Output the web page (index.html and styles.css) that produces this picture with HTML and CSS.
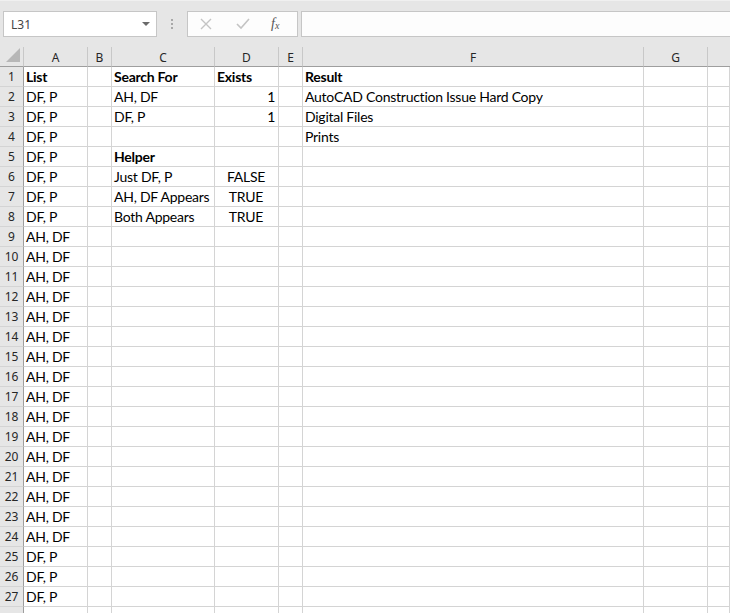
FILE: index.html
```html
<!DOCTYPE html>
<html>
<head>
<meta charset="utf-8">
<link rel="stylesheet" href="styles.css">
</head>
<body>
<div class="app">
  <div class="toolbar">
    <div class="namebox"><span>L31</span><span class="arrow"></span></div>
    <div class="dots"><i></i><i></i><i></i></div>
    <div class="fxbox">
      <svg class="ico" width="14" height="14" viewBox="0 0 14 14"><path d="M2 2 L12 12 M12 2 L2 12" stroke="#c4c4c4" stroke-width="1.4" fill="none"/></svg>
      <svg class="ico" width="16" height="14" viewBox="0 0 16 14"><path d="M2 7 L6 11 L14 2" stroke="#c4c4c4" stroke-width="1.6" fill="none"/></svg>
      <span class="fx">f<sub>x</sub></span>
    </div>
    <div class="formula"></div>
  </div>
  <div class="sheet">
    <div class="hd corner"><span class="tri"></span></div><div class="hd">A</div><div class="hd">B</div><div class="hd">C</div><div class="hd">D</div><div class="hd">E</div><div class="hd">F</div><div class="hd">G</div><div class="hd last"></div>

    <div class="rn">1</div><div class="c b">List</div><div class="c"></div><div class="c b">Search For</div><div class="c b">Exists</div><div class="c"></div><div class="c b">Result</div><div class="c"></div><div class="c"></div>
    <div class="rn">2</div><div class="c">DF, P</div><div class="c"></div><div class="c">AH, DF</div><div class="c r">1</div><div class="c"></div><div class="c">AutoCAD Construction Issue Hard Copy</div><div class="c"></div><div class="c"></div>
    <div class="rn">3</div><div class="c">DF, P</div><div class="c"></div><div class="c">DF, P</div><div class="c r">1</div><div class="c"></div><div class="c">Digital Files</div><div class="c"></div><div class="c"></div>
    <div class="rn">4</div><div class="c">DF, P</div><div class="c"></div><div class="c"></div><div class="c"></div><div class="c"></div><div class="c">Prints</div><div class="c"></div><div class="c"></div>
    <div class="rn">5</div><div class="c">DF, P</div><div class="c"></div><div class="c b">Helper</div><div class="c"></div><div class="c"></div><div class="c"></div><div class="c"></div><div class="c"></div>
    <div class="rn">6</div><div class="c">DF, P</div><div class="c"></div><div class="c">Just DF, P</div><div class="c m">FALSE</div><div class="c"></div><div class="c"></div><div class="c"></div><div class="c"></div>
    <div class="rn">7</div><div class="c">DF, P</div><div class="c"></div><div class="c">AH, DF Appears</div><div class="c m">TRUE</div><div class="c"></div><div class="c"></div><div class="c"></div><div class="c"></div>
    <div class="rn">8</div><div class="c">DF, P</div><div class="c"></div><div class="c">Both Appears</div><div class="c m">TRUE</div><div class="c"></div><div class="c"></div><div class="c"></div><div class="c"></div>
    <div class="rn">9</div><div class="c">AH, DF</div><div class="c"></div><div class="c"></div><div class="c"></div><div class="c"></div><div class="c"></div><div class="c"></div><div class="c"></div>
    <div class="rn">10</div><div class="c">AH, DF</div><div class="c"></div><div class="c"></div><div class="c"></div><div class="c"></div><div class="c"></div><div class="c"></div><div class="c"></div>
    <div class="rn">11</div><div class="c">AH, DF</div><div class="c"></div><div class="c"></div><div class="c"></div><div class="c"></div><div class="c"></div><div class="c"></div><div class="c"></div>
    <div class="rn">12</div><div class="c">AH, DF</div><div class="c"></div><div class="c"></div><div class="c"></div><div class="c"></div><div class="c"></div><div class="c"></div><div class="c"></div>
    <div class="rn">13</div><div class="c">AH, DF</div><div class="c"></div><div class="c"></div><div class="c"></div><div class="c"></div><div class="c"></div><div class="c"></div><div class="c"></div>
    <div class="rn">14</div><div class="c">AH, DF</div><div class="c"></div><div class="c"></div><div class="c"></div><div class="c"></div><div class="c"></div><div class="c"></div><div class="c"></div>
    <div class="rn">15</div><div class="c">AH, DF</div><div class="c"></div><div class="c"></div><div class="c"></div><div class="c"></div><div class="c"></div><div class="c"></div><div class="c"></div>
    <div class="rn">16</div><div class="c">AH, DF</div><div class="c"></div><div class="c"></div><div class="c"></div><div class="c"></div><div class="c"></div><div class="c"></div><div class="c"></div>
    <div class="rn">17</div><div class="c">AH, DF</div><div class="c"></div><div class="c"></div><div class="c"></div><div class="c"></div><div class="c"></div><div class="c"></div><div class="c"></div>
    <div class="rn">18</div><div class="c">AH, DF</div><div class="c"></div><div class="c"></div><div class="c"></div><div class="c"></div><div class="c"></div><div class="c"></div><div class="c"></div>
    <div class="rn">19</div><div class="c">AH, DF</div><div class="c"></div><div class="c"></div><div class="c"></div><div class="c"></div><div class="c"></div><div class="c"></div><div class="c"></div>
    <div class="rn">20</div><div class="c">AH, DF</div><div class="c"></div><div class="c"></div><div class="c"></div><div class="c"></div><div class="c"></div><div class="c"></div><div class="c"></div>
    <div class="rn">21</div><div class="c">AH, DF</div><div class="c"></div><div class="c"></div><div class="c"></div><div class="c"></div><div class="c"></div><div class="c"></div><div class="c"></div>
    <div class="rn">22</div><div class="c">AH, DF</div><div class="c"></div><div class="c"></div><div class="c"></div><div class="c"></div><div class="c"></div><div class="c"></div><div class="c"></div>
    <div class="rn">23</div><div class="c">AH, DF</div><div class="c"></div><div class="c"></div><div class="c"></div><div class="c"></div><div class="c"></div><div class="c"></div><div class="c"></div>
    <div class="rn">24</div><div class="c">AH, DF</div><div class="c"></div><div class="c"></div><div class="c"></div><div class="c"></div><div class="c"></div><div class="c"></div><div class="c"></div>
    <div class="rn">25</div><div class="c">DF, P</div><div class="c"></div><div class="c"></div><div class="c"></div><div class="c"></div><div class="c"></div><div class="c"></div><div class="c"></div>
    <div class="rn">26</div><div class="c">DF, P</div><div class="c"></div><div class="c"></div><div class="c"></div><div class="c"></div><div class="c"></div><div class="c"></div><div class="c"></div>
    <div class="rn">27</div><div class="c">DF, P</div><div class="c"></div><div class="c"></div><div class="c"></div><div class="c"></div><div class="c"></div><div class="c"></div><div class="c"></div>
    <div class="rn"></div><div class="c"></div><div class="c"></div><div class="c"></div><div class="c"></div><div class="c"></div><div class="c"></div><div class="c"></div><div class="c"></div>
  </div>
</div>
</body>
</html>
```
FILE: styles.css
```css
html, body {
  margin: 0;
  padding: 0;
  background: #ffffff;
  overflow: hidden;
}
.app {
  width: 730px;
  height: 613px;
  overflow: hidden;
  font-family: Lato, "Liberation Sans", sans-serif;
}
.toolbar {
  height: 47px;
  box-sizing: border-box;
  background: #e6e6e6;
  border-top: 1px solid #f0f0f0;
  display: flex;
  align-items: flex-start;
  padding-top: 10px;
  padding-left: 3px;
}
.namebox {
  width: 154px;
  height: 26px;
  box-sizing: border-box;
  background: #ffffff;
  border: 1px solid #c6c6c6;
  display: flex;
  align-items: center;
  justify-content: space-between;
  padding: 0 6px 0 7px;
  font-family: "Noto Sans", "Open Sans", sans-serif;
  font-size: 12px;
  color: #444444;
}
.arrow {
  width: 0;
  height: 0;
  border-left: 4px solid transparent;
  border-right: 4px solid transparent;
  border-top: 4px solid #6a6a6a;
}
.dots {
  width: 30px;
  height: 26px;
  display: flex;
  flex-direction: column;
  align-items: center;
  justify-content: center;
  gap: 2px;
}
.dots i {
  display: block;
  width: 2px;
  height: 2px;
  background: #a8a8a8;
}
.fxbox {
  width: 111px;
  height: 26px;
  box-sizing: border-box;
  background: #fdfdfd;
  border: 1px solid #c6c6c6;
  display: flex;
  align-items: center;
  padding-left: 11px;
  gap: 22px;
}
.ico { display: block; }
.fx {
  font-family: "Liberation Serif", serif;
  font-style: italic;
  font-size: 14px;
  color: #555555;
  margin-left: -2px;
}
.fx sub {
  font-size: 10px;
  vertical-align: -1px;
}
.formula {
  flex: 1;
  margin-left: 3px;
  height: 26px;
  box-sizing: border-box;
  background: #fdfdfd;
  border: 1px solid #c6c6c6;
  border-right: none;
}
.sheet {
  display: grid;
  grid-template-columns: 24px 64px 24px 103px 64px 24px 341px 64px 22px;
  grid-auto-rows: 20px;
}
.hd {
  background: #e6e6e6;
  box-sizing: border-box;
  border-right: 1px solid #c8c8c8;
  border-bottom: 1px solid #9e9e9e;
  font-family: "Noto Sans", "Open Sans", sans-serif;
  font-size: 12px;
  color: #262626;
  display: flex;
  align-items: center;
  justify-content: center;
  padding-top: 1px;
}
.hd.last { border-right: none; }
.corner {
  position: relative;
  border-right: 1px solid #c8c8c8;
}
.tri {
  position: absolute;
  right: 3px;
  bottom: 4px;
  width: 0;
  height: 0;
  border-left: 14px solid transparent;
  border-bottom: 14px solid #b7b7b7;
}
.rn {
  background: #e6e6e6;
  box-sizing: border-box;
  border-right: 1px solid #9e9e9e;
  border-bottom: 1px solid #d4d4d4;
  font-family: "Noto Sans", "Open Sans", sans-serif;
  font-size: 12px;
  color: #262626;
  display: flex;
  align-items: center;
  justify-content: center;
}
.c {
  box-sizing: border-box;
  border-right: 1px solid #d4d4d4;
  border-bottom: 1px solid #d4d4d4;
  font-size: 14px;
  letter-spacing: -0.25px;
  color: #000000;
  padding: 0 3px 0 2px;
  display: flex;
  align-items: center;
  white-space: nowrap;
}
.c.b { font-weight: bold; }
.c.r { justify-content: flex-end; }
.c.m { justify-content: center; }
```
